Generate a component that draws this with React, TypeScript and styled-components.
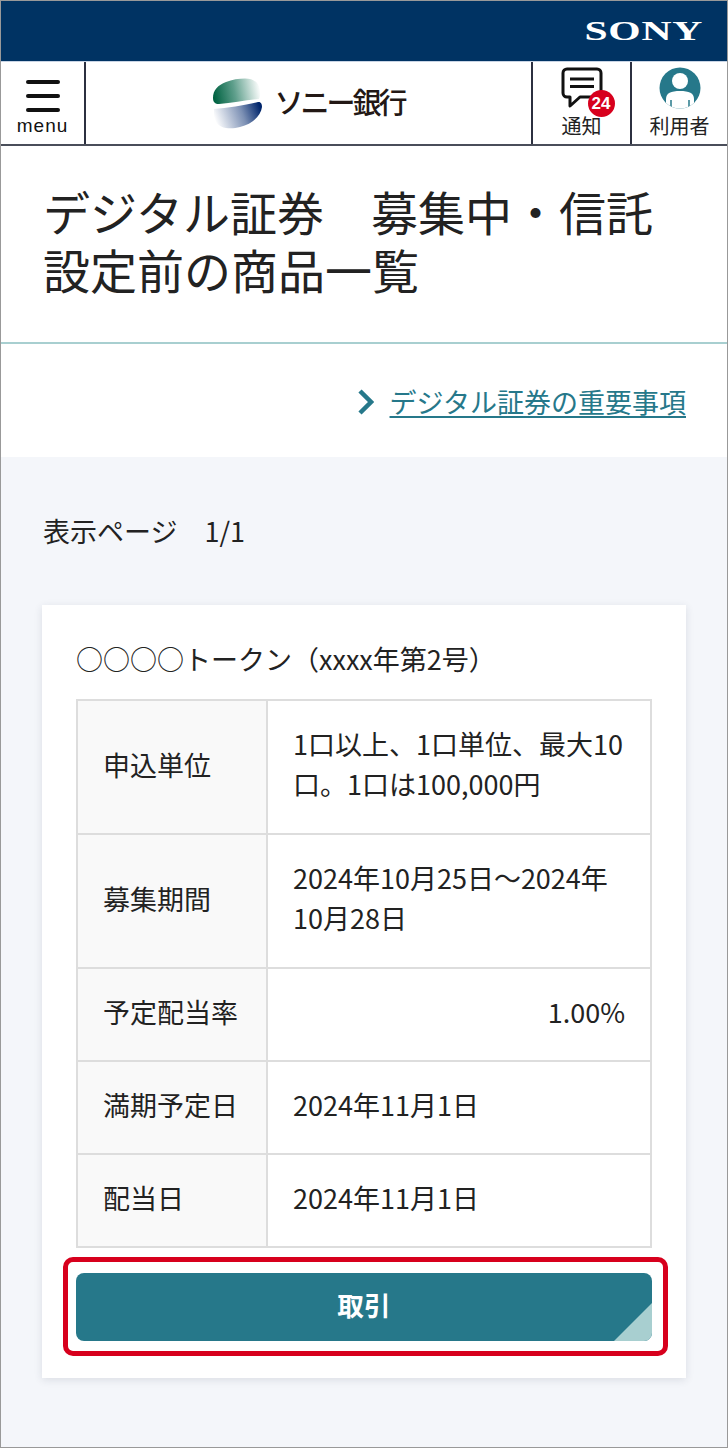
import React from 'react'
import styled, {createGlobalStyle} from 'styled-components'

const GlobalStyle = createGlobalStyle`
  html, body {
    margin: 0;
    padding: 0;
    background: #fff;
  }
  * {
    box-sizing: border-box;
  }
  body {
    font-family: 'Noto Sans CJK JP', 'Noto Sans', sans-serif;
    color: #222;
  }
`

const Page = styled.div`
  width: 728px;
  height: 1448px;
  border: 1px solid #999;
  display: flex;
  flex-direction: column;
  overflow: hidden;
`

const BrandBar = styled.div`
  height: 60px;
  flex: none;
  background: #003363;
  display: flex;
  align-items: center;
  justify-content: flex-end;
  padding-right: 24px;
`

const SonyMark = styled.span`
  font-family: 'Liberation Serif', serif;
  font-weight: 700;
  font-size: 27px;
  line-height: 1;
  letter-spacing: 0.5px;
  color: #fff;
  display: inline-block;
  transform: scaleX(1.54);
  transform-origin: right center;
`

const Header = styled.header`
  height: 85px;
  flex: none;
  display: flex;
  border-bottom: 2px solid #4a4e5a;
  border-top: 1px solid #c8d4e4;
`

const MenuCell = styled.div`
  width: 85px;
  flex: none;
  border-right: 2px solid #2c3040;
  display: flex;
  flex-direction: column;
  align-items: center;
  padding-top: 18px;
`

const BurgerLine = styled.span`
  display: block;
  width: 34px;
  height: 3.500px;
  border-radius: 2px;
  background: #111;
  margin-bottom: 10.500px;
`

const MenuLabel = styled.span`
  font-family: 'Liberation Sans', sans-serif;
  font-size: 19px;
  line-height: 18px;
  letter-spacing: 1px;
  color: #111;
  margin-top: -5px;
`

const LogoCell = styled.div`
  flex: 1;
  display: flex;
  align-items: center;
  justify-content: center;
  gap: 12px;
`

const LogoText = styled.span`
  font-size: 29px;
  font-weight: 500;
  line-height: 1;
  letter-spacing: -3px;
  color: #231815;
  margin-bottom: 4px;
`

const IconCell = styled.div<{$width: number}>`
  width: ${(p) => p.$width}px;
  flex: none;
  border-left: 2px solid #2c3040;
  display: flex;
  flex-direction: column;
  align-items: center;
  padding-top: 5px;
`

const IconWrap = styled.div`
  position: relative;
  height: 44px;
  display: flex;
`

const Badge = styled.span`
  position: absolute;
  right: -12px;
  bottom: -6px;
  width: 27px;
  height: 27px;
  border-radius: 50%;
  background: #d7001d;
  color: #fff;
  font-family: 'Liberation Sans', sans-serif;
  font-weight: 700;
  font-size: 17px;
  line-height: 27px;
  text-align: center;
`

const IconLabel = styled.span`
  font-size: 20px;
  line-height: 24px;
  color: #222;
  margin-top: 3px;
`

const TitleBlock = styled.div`
  height: 198px;
  flex: none;
  border-bottom: 2px solid #a8cfd0;
  padding: 36px 20px 0 42px;
`

const Title = styled.h1`
  margin: 0;
  font-size: 47px;
  font-weight: 400;
  line-height: 58px;
  color: #222;
`

const LinkRow = styled.div`
  height: 113px;
  flex: none;
  display: flex;
  align-items: center;
  justify-content: flex-end;
  gap: 16px;
  padding: 2px 41px 0 0;
`

const DocLink = styled.a`
  font-size: 27px;
  line-height: 36px;
  color: #26788a;
  text-decoration: underline;
  text-decoration-thickness: 2px;
  text-underline-offset: 3px;
`

const Body = styled.main`
  flex: 1;
  background: #f4f6fa;
  padding: 54px 41px 0;
`

const PageCount = styled.p`
  margin: 0 0 54px;
  padding-left: 1px;
  height: 40px;
  font-size: 27px;
  line-height: 40px;
  white-space: pre;
  color: #222;
`

const Card = styled.section`
  position: relative;
  background: #fff;
  height: 773px;
  padding: 33px 34px 0;
  box-shadow: 0 2px 8px rgba(40, 50, 70, 0.12);
`

const CardTitle = styled.h2`
  margin: 0 0 20px;
  font-size: 27px;
  font-weight: 400;
  line-height: 41px;
  color: #222;
`

const Table = styled.div`
  display: grid;
  grid-template-columns: 190px 1fr;
  border: 2px solid #ddd;
  border-bottom-width: 0;
`

const HeadCell = styled.div<{$height: number}>`
  height: ${(p) => p.$height}px;
  background: #f9f9f9;
  border-right: 2px solid #ddd;
  border-bottom: 2px solid #ddd;
  display: flex;
  align-items: center;
  padding: 0 0 5px 25px;
  font-size: 27px;
  line-height: 40px;
`

const ValueCell = styled.div<{$height: number; $right?: boolean}>`
  height: ${(p) => p.$height}px;
  border-bottom: 2px solid #ddd;
  display: flex;
  align-items: center;
  justify-content: ${(p) => (p.$right ? 'flex-end' : 'flex-start')};
  padding: 0 ${(p) => (p.$right ? 25 : 20)}px 6px 25px;
  font-size: 27px;
  line-height: 40px;
`

const TradeButton = styled.button`
  position: relative;
  display: block;
  overflow: hidden;
  width: 100%;
  height: 68px;
  margin-top: 25px;
  padding: 0 0 6px;
  border: 0;
  border-radius: 8px;
  background: #26788a;
  color: #fff;
  font-family: inherit;
  font-size: 26.670px;
  font-weight: 700;
`

const Corner = styled.span`
  position: absolute;
  right: 0;
  bottom: 0;
  width: 38px;
  height: 38px;
  background: #a8cfd0;
  clip-path: polygon(100% 0, 100% 100%, 0 100%);
`

const Highlight = styled.div`
  position: absolute;
  left: 21px;
  top: 652px;
  width: 605px;
  height: 99px;
  border: 5px solid #d7001d;
  border-radius: 10px;
  pointer-events: none;
`

const rows = [
  {label: '申込単位', value: '1口以上、1口単位、最大10口。1口は100,000円', height: 134},
  {label: '募集期間', value: '2024年10月25日～2024年10月28日', height: 134},
  {label: '予定配当率', value: '1.00%', height: 93, right: true},
  {label: '満期予定日', value: '2024年11月1日', height: 93},
  {label: '配当日', value: '2024年11月1日', height: 93},
]

function Logo() {
  return (
    <svg width="50" height="52" viewBox="0 -1 50 52">
      <defs>
        <linearGradient id="logoTop" x1="0" y1="0.5" x2="1" y2="0.4">
          <stop offset="0" stopColor="#006241" />
          <stop offset="0.45" stopColor="#5f9f8c" />
          <stop offset="1" stopColor="#ffffff" />
        </linearGradient>
        <linearGradient id="logoBottom" x1="0" y1="0.6" x2="1" y2="0.4">
          <stop offset="0" stopColor="#ffffff" />
          <stop offset="0.6" stopColor="#7c90b4" />
          <stop offset="1" stopColor="#00256b" />
        </linearGradient>
      </defs>
      <path
        d="M1 20 C1 12 6 7 14 4 C20 1.500 27 0.500 33 0.500 C41 0.500 47 4 48 12 C48.500 16 48 19 47 21 C35 22 20 25 7 26 C3 26 1 24 1 20 Z"
        fill="url(#logoTop)"
      />
      <path
        d="M2 31 C15 30 35 27 46 24 C49 23.500 50 26 50 29 C49 38 40 46 28 49 C23 50.500 18 50.500 14 50 C7 49 2 44 2 36 Z"
        fill="url(#logoBottom)"
      />
    </svg>
  )
}

function NoticeIcon() {
  return (
    <svg width="42" height="44" viewBox="0 0 42 44">
      <path
        d="M6 2 H36 A4 4 0 0 1 40 6 V26 A4 4 0 0 1 36 30 H19 L9 39 V30 H6 A4 4 0 0 1 2 26 V6 A4 4 0 0 1 6 2 Z"
        fill="#fff"
        stroke="#111"
        strokeWidth="3"
        strokeLinejoin="round"
      />
      <path d="M9 12 H33 M9 19.500 H33" stroke="#111" strokeWidth="3" />
    </svg>
  )
}

function UserIcon() {
  return (
    <svg width="42" height="44" viewBox="0 0 42 44">
      <defs>
        <clipPath id="userClip">
          <circle cx="21" cy="21" r="20.500" />
        </clipPath>
      </defs>
      <circle cx="21" cy="21" r="20.500" fill="#26788a" />
      <g clipPath="url(#userClip)">
        <circle cx="21" cy="14" r="8" fill="#fff" />
        <path d="M7 44 V32 C7 26 12 24 21 24 C30 24 35 26 35 32 V44 Z" fill="#fff" />
        <path d="M12 33 V42 M30 33 V42" stroke="#26788a" strokeWidth="1.500" />
      </g>
    </svg>
  )
}

function Chevron() {
  return (
    <svg width="17" height="26" viewBox="0 0 17 26">
      <path d="M3 2 L14 13 L3 24" fill="none" stroke="#26788a" strokeWidth="4.500" />
    </svg>
  )
}

export default function App() {
  return (
    <Page>
      <GlobalStyle />
      <BrandBar>
        <SonyMark>SONY</SonyMark>
      </BrandBar>
      <Header>
        <MenuCell>
          <BurgerLine />
          <BurgerLine />
          <BurgerLine />
          <MenuLabel>menu</MenuLabel>
        </MenuCell>
        <LogoCell>
          <Logo />
          <LogoText>ソニー銀行</LogoText>
        </LogoCell>
        <IconCell $width={99}>
          <IconWrap>
            <NoticeIcon />
            <Badge>24</Badge>
          </IconWrap>
          <IconLabel>通知</IconLabel>
        </IconCell>
        <IconCell $width={97}>
          <IconWrap>
            <UserIcon />
          </IconWrap>
          <IconLabel>利用者</IconLabel>
        </IconCell>
      </Header>
      <TitleBlock>
        <Title>
          デジタル証券　募集中・信託
          <br />
          設定前の商品一覧
        </Title>
      </TitleBlock>
      <LinkRow>
        <Chevron />
        <DocLink href="#">デジタル証券の重要事項</DocLink>
      </LinkRow>
      <Body>
        <PageCount>表示ページ　1/1</PageCount>
        <Card>
          <CardTitle>○○○○トークン（xxxx年第2号）</CardTitle>
          <Table>
            {rows.map((row) => (
              <React.Fragment key={row.label}>
                <HeadCell $height={row.height}>{row.label}</HeadCell>
                <ValueCell $height={row.height} $right={row.right}>
                  <span>{row.value}</span>
                </ValueCell>
              </React.Fragment>
            ))}
          </Table>
          <TradeButton>
            取引
            <Corner />
          </TradeButton>
          <Highlight />
        </Card>
      </Body>
    </Page>
  )
}
